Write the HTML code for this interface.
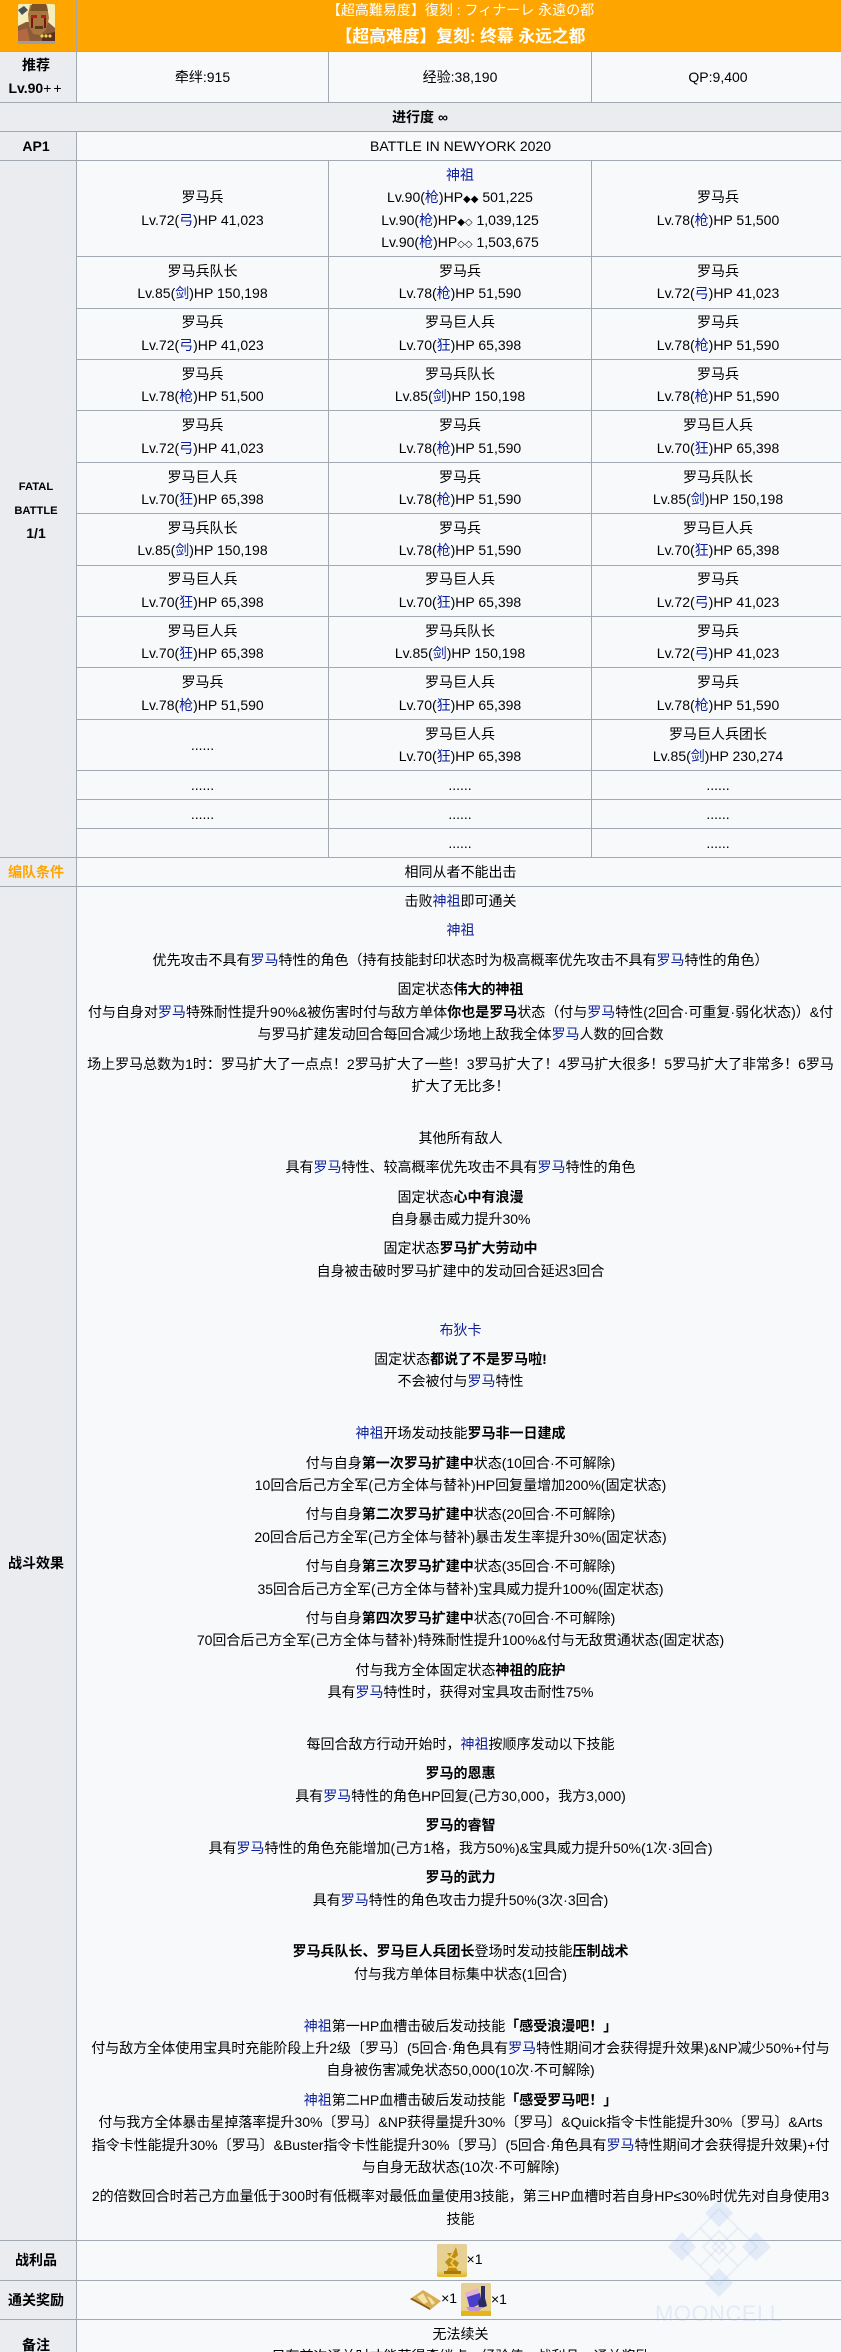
<!DOCTYPE html>
<html lang="zh">
<head>
<meta charset="utf-8">
<title>终幕 永远之都</title>
<style>
html,body{margin:0;padding:0;width:841px;height:2352px;overflow:hidden;background:#f8f9fa}
body{position:relative;font-family:"Liberation Sans","Noto Sans CJK SC",sans-serif;font-size:14px;line-height:22.4px;color:#202122}
table{position:absolute;left:-5px;top:-1px;width:849px;table-layout:fixed;border-collapse:collapse;color:#000}
td,th{border:1px solid #a2a9b1;padding:2.8px 5.6px;text-align:center;vertical-align:middle;background:#f8f9fa;font-weight:400}
th{background:#eaecf0;font-weight:700}
a{color:#0b1f9c;text-decoration:none}
p{margin:7px 0}
b{font-weight:700}
.o{background:#ffa500;color:#fff}
.d{font:10px/1 "DejaVu Sans",sans-serif}
.i{vertical-align:middle;display:inline-block}
.s{font-size:11.2px}
#wm{position:absolute;left:640px;top:2190px;pointer-events:none}
</style>
</head>
<body>
<table>
<colgroup><col style="width:81px"><col style="width:252px"><col style="width:263px"><col style="width:253px"></colgroup>
<tr>
<td class="o" style="padding:0"><div style="height:50.6px;position:relative">
<svg style="position:absolute;left:22px;top:4px" width="37" height="40" viewBox="0 0 37 40">
<rect width="37" height="40" rx="2" fill="#f4efb8"/>
<path d="M0 22 L8 18 L30 18 L37 24 V40 H0Z" fill="#8a5a3a"/>
<path d="M12 1 H29 L31 14 L28 26 L22 31 L15 30 L11 22 L10 10Z" fill="#a8763f"/>
<path d="M14 0 H28 L30 7 H12Z" fill="#7c5226"/>
<path d="M13 11 H19 V14 H13Z M23 11 H28 V14 H23Z" fill="#b81c1c"/>
<path d="M13 14 h2 v10 h-2Z M26 14 h2 v10 h-2Z" fill="#7a1612"/>
<path d="M17 22 h8 v3 h-8Z" fill="#5c3a1c"/>
<path d="M0 6 L6 2 L10 6 L4 11Z" fill="#4a5058"/>
<path d="M0 27 L9 24 L12 37 H0Z" fill="#b2693f"/>
<path d="M24 31 L37 28 V37 H24Z" fill="#5c2c1e"/>
<circle cx="24" cy="32" r="1.6" fill="#ecd44a"/><circle cx="28" cy="32" r="1.6" fill="#ecd44a"/><circle cx="32" cy="32" r="1.6" fill="#ecd44a"/>
<rect y="37" width="37" height="3" fill="#9aa0a6"/>
</svg></div></td>
<td class="o" colspan="3" style="padding:0"><div style="height:50.6px;position:relative">
<div style="position:absolute;left:0;right:0;top:0;line-height:20px">【超高難易度】復刻 : フィナーレ 永遠の都</div>
<div style="position:absolute;left:0;right:0;top:23px;line-height:27px;font-size:16.8px;font-weight:700">【超高难度】复刻: 终幕 永远之都</div>
</div></td>
</tr>
<tr><th>推荐<br>Lv.90<span style="font-weight:400;letter-spacing:2px">++</span></th><td>牵绊:915</td><td>经验:38,190</td><td>QP:9,400</td></tr>
<tr><th colspan="4">进行度 ∞</th></tr>
<tr><th>AP1</th><td colspan="3">BATTLE IN NEWYORK 2020</td></tr>
<tr>
<th rowspan="14"><span class="s">FATAL<br>BATTLE</span><br>1/1</th>
<td>罗马兵<br>Lv.72(<a>弓</a>)HP 41,023</td>
<td><a>神祖</a><br>Lv.90(<a>枪</a>)HP<span class="d">◆◆</span> 501,225<br>Lv.90(<a>枪</a>)HP<span class="d">◆◇</span> 1,039,125<br>Lv.90(<a>枪</a>)HP<span class="d">◇◇</span> 1,503,675</td>
<td>罗马兵<br>Lv.78(<a>枪</a>)HP 51,500</td>
</tr>
<tr><td>罗马兵队长<br>Lv.85(<a>剑</a>)HP 150,198</td><td>罗马兵<br>Lv.78(<a>枪</a>)HP 51,590</td><td>罗马兵<br>Lv.72(<a>弓</a>)HP 41,023</td></tr>
<tr><td>罗马兵<br>Lv.72(<a>弓</a>)HP 41,023</td><td>罗马巨人兵<br>Lv.70(<a>狂</a>)HP 65,398</td><td>罗马兵<br>Lv.78(<a>枪</a>)HP 51,590</td></tr>
<tr><td>罗马兵<br>Lv.78(<a>枪</a>)HP 51,500</td><td>罗马兵队长<br>Lv.85(<a>剑</a>)HP 150,198</td><td>罗马兵<br>Lv.78(<a>枪</a>)HP 51,590</td></tr>
<tr><td>罗马兵<br>Lv.72(<a>弓</a>)HP 41,023</td><td>罗马兵<br>Lv.78(<a>枪</a>)HP 51,590</td><td>罗马巨人兵<br>Lv.70(<a>狂</a>)HP 65,398</td></tr>
<tr><td>罗马巨人兵<br>Lv.70(<a>狂</a>)HP 65,398</td><td>罗马兵<br>Lv.78(<a>枪</a>)HP 51,590</td><td>罗马兵队长<br>Lv.85(<a>剑</a>)HP 150,198</td></tr>
<tr><td>罗马兵队长<br>Lv.85(<a>剑</a>)HP 150,198</td><td>罗马兵<br>Lv.78(<a>枪</a>)HP 51,590</td><td>罗马巨人兵<br>Lv.70(<a>狂</a>)HP 65,398</td></tr>
<tr><td>罗马巨人兵<br>Lv.70(<a>狂</a>)HP 65,398</td><td>罗马巨人兵<br>Lv.70(<a>狂</a>)HP 65,398</td><td>罗马兵<br>Lv.72(<a>弓</a>)HP 41,023</td></tr>
<tr><td>罗马巨人兵<br>Lv.70(<a>狂</a>)HP 65,398</td><td>罗马兵队长<br>Lv.85(<a>剑</a>)HP 150,198</td><td>罗马兵<br>Lv.72(<a>弓</a>)HP 41,023</td></tr>
<tr><td>罗马兵<br>Lv.78(<a>枪</a>)HP 51,590</td><td>罗马巨人兵<br>Lv.70(<a>狂</a>)HP 65,398</td><td>罗马兵<br>Lv.78(<a>枪</a>)HP 51,590</td></tr>
<tr><td>......</td><td>罗马巨人兵<br>Lv.70(<a>狂</a>)HP 65,398</td><td>罗马巨人兵团长<br>Lv.85(<a>剑</a>)HP 230,274</td></tr>
<tr><td>......</td><td>......</td><td>......</td></tr>
<tr><td>......</td><td>......</td><td>......</td></tr>
<tr><td>&nbsp;</td><td>......</td><td>......</td></tr>
<tr><th style="color:#ffa500">编队条件</th><td colspan="3">相同从者不能出击</td></tr>
<tr>
<th>战斗效果</th>
<td colspan="3">击败<a>神祖</a>即可通关
<p><a>神祖</a></p>
<p>优先攻击不具有<a>罗马</a>特性的角色（持有技能封印状态时为极高概率优先攻击不具有<a>罗马</a>特性的角色）</p>
<p>固定状态<b>伟大的神祖</b><br>付与自身对<a>罗马</a>特殊耐性提升90%&amp;被伤害时付与敌方单体<b>你也是罗马</b>状态（付与<a>罗马</a>特性(2回合·可重复·弱化状态)）&amp;付<br>与罗马扩建发动回合每回合减少场地上敌我全体<a>罗马</a>人数的回合数</p>
<p>场上罗马总数为1时：罗马扩大了一点点！2罗马扩大了一些！3罗马扩大了！4罗马扩大很多！5罗马扩大了非常多！6罗马<br>扩大了无比多！<br><br></p>
<p>其他所有敌人</p>
<p>具有<a>罗马</a>特性、较高概率优先攻击不具有<a>罗马</a>特性的角色</p>
<p>固定状态<b>心中有浪漫</b><br>自身暴击威力提升30%</p>
<p>固定状态<b>罗马扩大劳动中</b><br>自身被击破时罗马扩建中的发动回合延迟3回合</p>
<p><br></p>
<p><a>布狄卡</a></p>
<p>固定状态<b>都说了不是罗马啦!</b><br>不会被付与<a>罗马</a>特性<br><br></p>
<p><a>神祖</a>开场发动技能<b>罗马非一日建成</b></p>
<p>付与自身<b>第一次罗马扩建中</b>状态(10回合·不可解除)<br>10回合后己方全军(己方全体与替补)HP回复量增加200%(固定状态)</p>
<p>付与自身<b>第二次罗马扩建中</b>状态(20回合·不可解除)<br>20回合后己方全军(己方全体与替补)暴击发生率提升30%(固定状态)</p>
<p>付与自身<b>第三次罗马扩建中</b>状态(35回合·不可解除)<br>35回合后己方全军(己方全体与替补)宝具威力提升100%(固定状态)</p>
<p>付与自身<b>第四次罗马扩建中</b>状态(70回合·不可解除)<br>70回合后己方全军(己方全体与替补)特殊耐性提升100%&amp;付与无敌贯通状态(固定状态)</p>
<p>付与我方全体固定状态<b>神祖的庇护</b><br>具有<a>罗马</a>特性时，获得对宝具攻击耐性75%<br><br></p>
<p>每回合敌方行动开始时，<a>神祖</a>按顺序发动以下技能</p>
<p><b>罗马的恩惠</b><br>具有<a>罗马</a>特性的角色HP回复(己方30,000，我方3,000)</p>
<p><b>罗马的睿智</b><br>具有<a>罗马</a>特性的角色充能增加(己方1格，我方50%)&amp;宝具威力提升50%(1次·3回合)</p>
<p><b>罗马的武力</b><br>具有<a>罗马</a>特性的角色攻击力提升50%(3次·3回合)<br><br></p>
<p><b>罗马兵队长、罗马巨人兵团长</b>登场时发动技能<b>压制战术</b><br>付与我方单体目标集中状态(1回合)<br><br></p>
<p><a>神祖</a>第一HP血槽击破后发动技能<b>「感受浪漫吧！」</b><br>付与敌方全体使用宝具时充能阶段上升2级〔罗马〕(5回合·角色具有<a>罗马</a>特性期间才会获得提升效果)&amp;NP减少50%+付与<br>自身被伤害减免状态50,000(10次·不可解除)</p>
<p><a>神祖</a>第二HP血槽击破后发动技能<b>「感受罗马吧！」</b><br>付与我方全体暴击星掉落率提升30%〔罗马〕&amp;NP获得量提升30%〔罗马〕&amp;Quick指令卡性能提升30%〔罗马〕&amp;Arts<br>指令卡性能提升30%〔罗马〕&amp;Buster指令卡性能提升30%〔罗马〕(5回合·角色具有<a>罗马</a>特性期间才会获得提升效果)+付<br>与自身无敌状态(10次·不可解除)</p>
<p>2的倍数回合时若己方血量低于300时有低概率对最低血量使用3技能，第三HP血槽时若自身HP≤30%时优先对自身使用3<br>技能</p>
</td>
</tr>
<tr><th>战利品</th><td colspan="3">
<svg class="i" width="30" height="33" viewBox="0 0 30 33"><defs><linearGradient id="g1" x1="0" y1="0" x2="0" y2="1"><stop offset="0" stop-color="#e6cf98"/><stop offset=".8" stop-color="#e8d28a"/><stop offset="1" stop-color="#e3b71c"/></linearGradient></defs><rect width="30" height="33" rx="2" fill="url(#g1)"/><path d="M19 3 L21 11 L17 15 L22 19 L19 24 L22 28 H9 L12 23 L8 18 L13 13 L10 9 L16 9Z" fill="#c08d12"/><path d="M16 9 L13 13 L17 15 L14 19 L18 23 L12 23" fill="none" stroke="#f2d35a" stroke-width="1.5"/><rect x="7" y="27" width="17" height="3" fill="#a87a0c"/></svg><span style="margin-right:2px">×1</span></td></tr>
<tr><th>通关奖励</th><td colspan="3">
<svg class="i" width="31" height="20" viewBox="0 0 31 20"><path d="M0 9 L13 0 L31 11 L20 20Z" fill="#d9ad55"/><path d="M0 9 L20 20 L20 18 L2 8Z" fill="#8a5c1a"/><path d="M7 7 L13 3 L18 12 L14 14Z" fill="#f2e2a6"/><path d="M17 6 L21 8 L25 13 L22 15Z" fill="#f2e2a6"/></svg>×1 <svg class="i" width="30" height="33" viewBox="0 0 30 33"><rect width="30" height="33" rx="2" fill="url(#g1)"/><path d="M4 10 L17 5 L20 18 L8 24Z" fill="#e0b0d8"/><path d="M6 14 L19 10 L21 20 L9 26Z" fill="#4a3fc8"/><path d="M20 3 h4 v12 l2 8 l-8 3 l-1 -8 l3 -3Z" fill="#2a2a66"/><path d="M5 24 L22 24 L18 28 L8 28Z" fill="#c890d8"/><rect y="28" width="30" height="5" fill="#e3b71c"/></svg><span style="margin-right:4px">×1</span></td></tr>
<tr><th>备注</th><td colspan="3">无法续关<br>只有首次通关时才能获得牵绊点、经验值、战利品、通关奖励</td></tr>
</table>
<svg id="wm" width="160" height="140" viewBox="640 2190 160 140" fill="none">
<g fill="#8cb4ea" fill-opacity=".2">
<path d="M719 2199 L733 2213 L719 2227 L705 2213Z"/>
<path d="M682 2232 L696 2247 L682 2261 L668 2247Z"/>
<path d="M756 2232 L771 2247 L756 2261 L742 2247Z"/>
<path d="M719 2268 L733 2283 L719 2297 L705 2283Z"/>
</g>
<g stroke="#8cb4ea" stroke-opacity=".14" stroke-width="2">
<path d="M719 2231 L735 2247 L719 2263 L703 2247Z"/>
<path d="M719 2240 L726 2247 L719 2254 L712 2247Z"/>
<path d="M700 2228 L719 2209 M738 2228 L719 2209"/>
<path d="M700 2228 L719 2247 L738 2228"/>
<path d="M700 2228 L681 2247 L700 2266 L719 2247 L738 2266 L757 2247 L738 2228"/>
<path d="M700 2266 L719 2285 L738 2266"/>
</g>
<text x="655" y="2321" font-family="Liberation Sans" font-size="22" letter-spacing=".5" fill="#8cb4ea" fill-opacity=".2">MOONCELL</text>
</svg>
</body>
</html>
